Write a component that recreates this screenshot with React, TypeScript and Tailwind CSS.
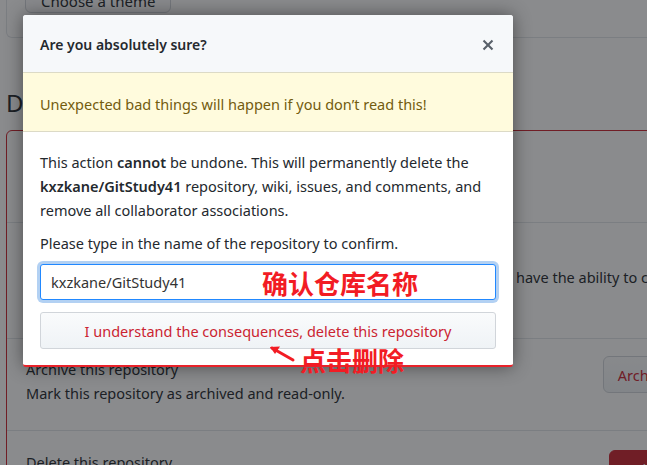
import React from "react";

const rows = [
  {
    title: "Change repository visibility",
    desc: ["This repository is currently public."],
    action: "Change visibility",
    danger: false,
  },
];

function XIcon() {
  return (
    <svg viewBox="0 0 12 16" width="12" height="16" fill="currentColor" aria-hidden="true">
      <path d="M7.48 8l3.75 3.75-1.48 1.48L6 9.48l-3.75 3.75-1.48-1.48L4.52 8 .77 4.25l1.48-1.48L6 6.52l3.75-3.75 1.48 1.48L7.48 8z" />
    </svg>
  );
}

function BackgroundPage() {
  return (
    <div className="ml-[6px] w-[799px]">
      <div className="flow-root h-[38px] border border-t-0 border-[#e1e4e8] rounded-b-md px-[18px]">
        <button
          type="button"
          className="block -mt-[11px] h-[24px] leading-[20px] px-[15px] border border-[#d1d5da] rounded-md bg-[#fafbfc] text-[#24292e] text-[15px]"
        >
          Choose a theme
        </button>
      </div>

      <h2 className="mt-[47px] text-[24px] leading-[36px] text-[#24292e]">Danger Zone</h2>

      <div className="mt-[9px] border border-[#cb2431] rounded-md">
        {rows.map((row) => (
          <div key={row.title} className="h-[91px] px-[19px] pt-[18px]">
            <p className="font-semibold">{row.title}</p>
            <p>{row.desc[0]}</p>
          </div>
        ))}

        <div className="h-[116px] border-t border-[#e1e4e8] px-[19px] pt-[18px]">
          <p className="font-semibold">Transfer ownership</p>
          <p className="whitespace-nowrap">
            <span className="inline-block w-[490px] align-top">
              <span className="block w-[460px] overflow-hidden">
                Transfer this repository to another user or to an organization where you
              </span>
            </span>
            have the ability to create repositories.
          </p>
        </div>

        <div className="h-[92px] border-t border-[#e1e4e8] px-[19px] pt-[18px] flex items-start justify-between">
          <div>
            <p>Archive this repository</p>
            <p>Mark this repository as archived and read-only.</p>
          </div>
          <button
            type="button"
            className="-mt-[1px] h-[37px] px-[14px] border border-[#d1d5da] rounded-md bg-gradient-to-b from-[#fafbfc] to-[#eff3f6] text-[#cb2431]"
          >
            Archive this repository
          </button>
        </div>

        <div className="h-[60px] border-t border-[#e1e4e8] px-[19px] pt-[19px] flex items-start justify-between">
          <p>Delete this repository</p>
          <button
            type="button"
            className="h-[37px] px-[14px] border border-[#cb2431] rounded-md bg-[#cb2431] text-white"
          >
            Delete this repository
          </button>
        </div>
      </div>
    </div>
  );
}

export default function App() {
  return (
    <div className="relative w-[647px] h-[465px] overflow-hidden bg-white text-[14.5px] leading-[24px] text-[#24292e] font-['Noto_Sans','Liberation_Sans',sans-serif]">
      <BackgroundPage />

      <div className="absolute inset-0 bg-[rgba(22,24,27,0.5)]" />

      <div className="absolute left-[23px] top-[15px] w-[490px] rounded-[3px] overflow-hidden bg-white border-b-2 border-[#e8222a] shadow-[0_0_18px_rgba(0,0,0,0.45)]">
        <div className="h-[58px] px-[17px] pt-[2px] flex items-center justify-between bg-[#f6f8fa] border-b border-[#dcdac6]">
          <h3 className="font-semibold text-[14px] text-[#24292e]">Are you absolutely sure?</h3>
          <button type="button" aria-label="Close" className="text-[#586069] mr-[2px]">
            <XIcon />
          </button>
        </div>

        <div className="h-[59px] px-[17px] pt-[4px] flex items-center bg-[#fffbdd] border-b border-[#dcdac6] text-[#735c0f]">
          Unexpected bad things will happen if you don’t read this!
        </div>

        <div className="px-[17px] pt-[18px] pb-[16px]">
          <p>
            This action <b className="font-semibold">cannot</b> be undone. This will permanently delete the{" "}
            <b className="font-semibold">kxzkane/GitStudy41</b> repository, wiki, issues, and comments, and remove
            all collaborator associations.
          </p>
          <p className="mt-[9px]">Please type in the name of the repository to confirm.</p>
          <input
            readOnly
            value="kxzkane/GitStudy41"
            className="mt-[9px] w-full h-[36px] px-[10px] rounded-[3px] border border-[#2188ff] bg-white text-[#333] outline-none shadow-[0_0_0_3px_rgba(3,102,214,0.3)]"
          />
          <button
            type="button"
            className="mt-[12px] w-full h-[37px] rounded-[3px] border border-[#d1d5da] bg-gradient-to-b from-[#fafbfc] to-[#eff3f6] text-[#cb2431]"
          >
            I understand the consequences, delete this repository
          </button>
        </div>
      </div>

      <span className="absolute left-[262px] top-[267px] text-[26px] leading-[32px] font-bold text-[#f21c24] font-['Noto_Sans_CJK_SC',sans-serif]">
        确认仓库名称
      </span>

      <svg className="absolute left-[266px] top-[342px]" width="32" height="22" viewBox="0 0 32 22" aria-hidden="true">
        <path d="M27 18 L6 6" stroke="#f21c24" strokeWidth="3" strokeLinecap="round" />
        <path d="M4 5 L14 4.5 L9 12 Z" fill="#f21c24" />
      </svg>

      <span className="absolute left-[300px] top-[344px] text-[26px] leading-[32px] font-bold text-[#f21c24] font-['Noto_Sans_CJK_SC',sans-serif]">
        点击删除
      </span>
    </div>
  );
}
